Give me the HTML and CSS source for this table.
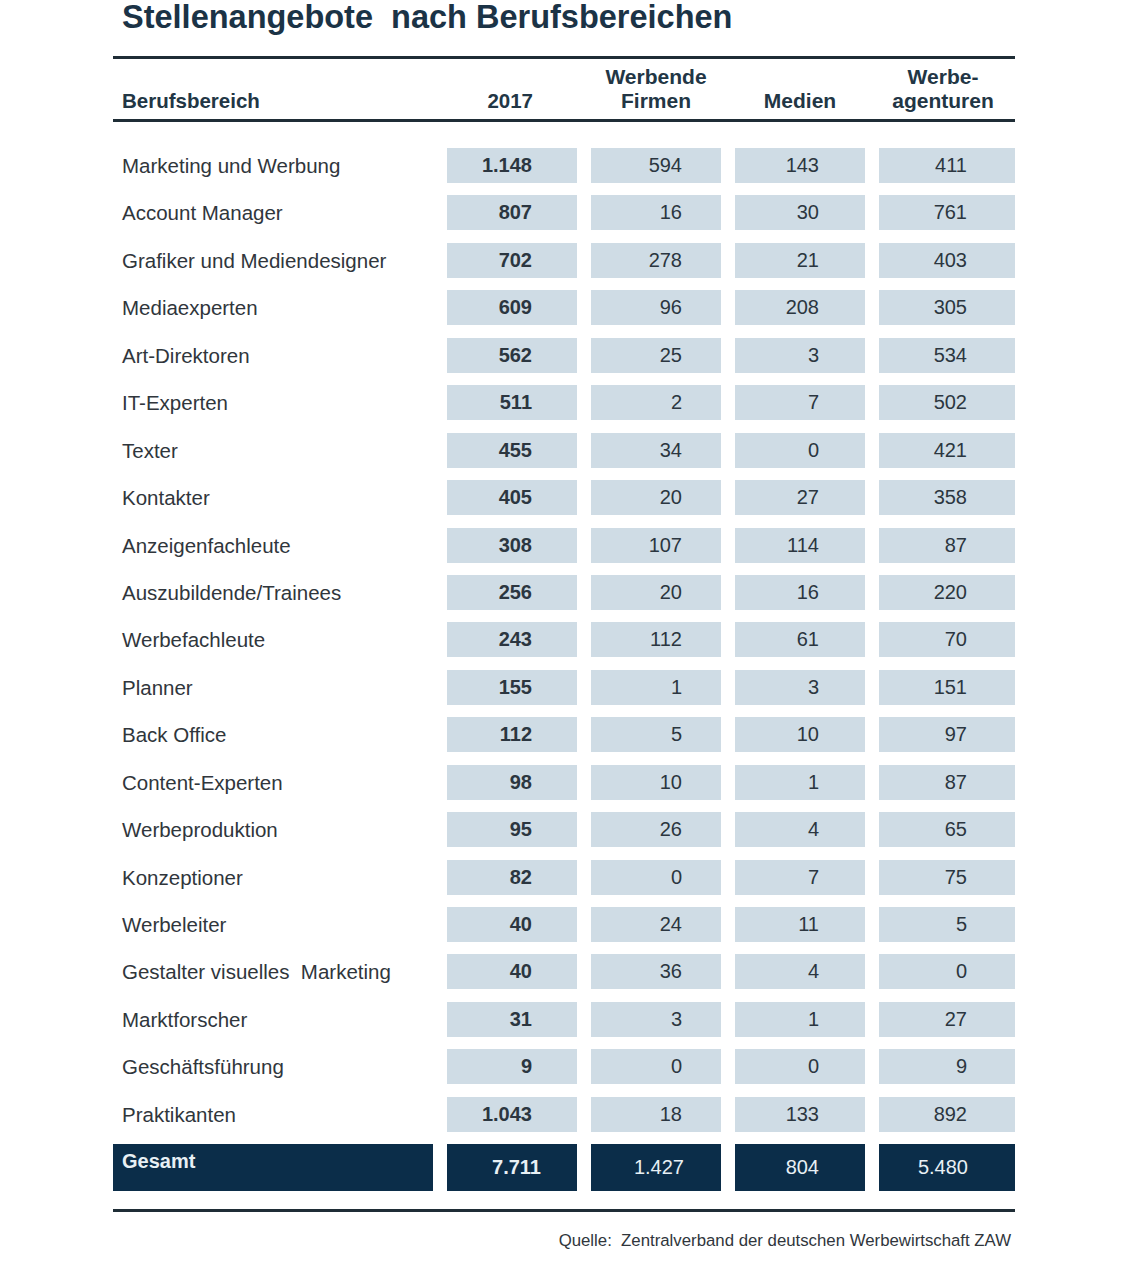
FILE: index.html
```html
<!DOCTYPE html>
<html lang="de">
<head>
<meta charset="utf-8">
<title>Stellenangebote nach Berufsbereichen</title>
<link rel="stylesheet" href="styles.css">
</head>
<body>
<div class="page">
  <h1 class="title">Stellenangebote&nbsp; nach Berufsbereichen</h1>
  <div class="table">
    <div class="row head">
      <div class="h-label">Berufsbereich</div>
      <div class="h-num c1">2017</div>
      <div class="h-num">Werbende<br>Firmen</div>
      <div class="h-num">Medien</div>
      <div class="h-num c4">Werbe-<br>agenturen</div>
    </div>
    <div class="body">
      <div class="row"><div class="label">Marketing und Werbung</div><div class="cell c1 b">1.148</div><div class="cell c2">594</div><div class="cell c3">143</div><div class="cell c4">411</div></div>
      <div class="row"><div class="label">Account Manager</div><div class="cell c1 b">807</div><div class="cell c2">16</div><div class="cell c3">30</div><div class="cell c4">761</div></div>
      <div class="row"><div class="label">Grafiker und Mediendesigner</div><div class="cell c1 b">702</div><div class="cell c2">278</div><div class="cell c3">21</div><div class="cell c4">403</div></div>
      <div class="row"><div class="label">Mediaexperten</div><div class="cell c1 b">609</div><div class="cell c2">96</div><div class="cell c3">208</div><div class="cell c4">305</div></div>
      <div class="row"><div class="label">Art-Direktoren</div><div class="cell c1 b">562</div><div class="cell c2">25</div><div class="cell c3">3</div><div class="cell c4">534</div></div>
      <div class="row"><div class="label">IT-Experten</div><div class="cell c1 b">511</div><div class="cell c2">2</div><div class="cell c3">7</div><div class="cell c4">502</div></div>
      <div class="row"><div class="label">Texter</div><div class="cell c1 b">455</div><div class="cell c2">34</div><div class="cell c3">0</div><div class="cell c4">421</div></div>
      <div class="row"><div class="label">Kontakter</div><div class="cell c1 b">405</div><div class="cell c2">20</div><div class="cell c3">27</div><div class="cell c4">358</div></div>
      <div class="row"><div class="label">Anzeigenfachleute</div><div class="cell c1 b">308</div><div class="cell c2">107</div><div class="cell c3">114</div><div class="cell c4">87</div></div>
      <div class="row"><div class="label">Auszubildende/Trainees</div><div class="cell c1 b">256</div><div class="cell c2">20</div><div class="cell c3">16</div><div class="cell c4">220</div></div>
      <div class="row"><div class="label">Werbefachleute</div><div class="cell c1 b">243</div><div class="cell c2">112</div><div class="cell c3">61</div><div class="cell c4">70</div></div>
      <div class="row"><div class="label">Planner</div><div class="cell c1 b">155</div><div class="cell c2">1</div><div class="cell c3">3</div><div class="cell c4">151</div></div>
      <div class="row"><div class="label">Back Office</div><div class="cell c1 b">112</div><div class="cell c2">5</div><div class="cell c3">10</div><div class="cell c4">97</div></div>
      <div class="row"><div class="label">Content-Experten</div><div class="cell c1 b">98</div><div class="cell c2">10</div><div class="cell c3">1</div><div class="cell c4">87</div></div>
      <div class="row"><div class="label">Werbeproduktion</div><div class="cell c1 b">95</div><div class="cell c2">26</div><div class="cell c3">4</div><div class="cell c4">65</div></div>
      <div class="row"><div class="label">Konzeptioner</div><div class="cell c1 b">82</div><div class="cell c2">0</div><div class="cell c3">7</div><div class="cell c4">75</div></div>
      <div class="row"><div class="label">Werbeleiter</div><div class="cell c1 b">40</div><div class="cell c2">24</div><div class="cell c3">11</div><div class="cell c4">5</div></div>
      <div class="row"><div class="label">Gestalter visuelles&nbsp; Marketing</div><div class="cell c1 b">40</div><div class="cell c2">36</div><div class="cell c3">4</div><div class="cell c4">0</div></div>
      <div class="row"><div class="label">Marktforscher</div><div class="cell c1 b">31</div><div class="cell c2">3</div><div class="cell c3">1</div><div class="cell c4">27</div></div>
      <div class="row"><div class="label">Geschäftsführung</div><div class="cell c1 b">9</div><div class="cell c2">0</div><div class="cell c3">0</div><div class="cell c4">9</div></div>
      <div class="row"><div class="label">Praktikanten</div><div class="cell c1 b">1.043</div><div class="cell c2">18</div><div class="cell c3">133</div><div class="cell c4">892</div></div>
      <div class="row total"><div class="t-label">Gesamt</div><div class="tcell c1 b">7.711</div><div class="tcell c2">1.427</div><div class="tcell c3">804</div><div class="tcell c4">5.480</div></div>
    </div>
  </div>
  <div class="source">Quelle:&nbsp; Zentralverband der deutschen Werbewirtschaft ZAW</div>
</div>
</body>
</html>
```

FILE: styles.css
```css
html, body {
  margin: 0;
  padding: 0;
  background: #ffffff;
}

body {
  font-family: "Liberation Sans", Arial, sans-serif;
  color: #2f353b;
}

.page {
  width: 902px;
  margin-left: 113px;
}

.title {
  margin: 0;
  padding-left: 9px;
  font-size: 32.5px;
  line-height: 34px;
  font-weight: bold;
  color: #1b3346;
  white-space: nowrap;
}

.table {
  margin-top: 22px;
  border-top: 3px solid #1f2d36;
}

.row {
  display: grid;
  grid-template-columns: 320px 130px 130px 130px 136px;
  column-gap: 14px;
  height: 35px;
}

.head {
  box-sizing: border-box;
  height: 63px;
  border-bottom: 3px solid #1f2d36;
  align-items: end;
}

.h-label,
.h-num {
  font-size: 21px;
  line-height: 24px;
  font-weight: bold;
  color: #223645;
  padding-bottom: 6px;
}

.h-label {
  padding-left: 9px;
  font-size: 20.5px;
}

.h-num {
  text-align: center;
}

.h-num.c1 {
  text-align: right;
  padding-right: 44px;
  font-size: 20.5px;
}

.h-num.c4 {
  padding-right: 8px;
}

.body {
  display: flex;
  flex-direction: column;
  gap: 12.45px;
  padding-top: 26px;
}

.label {
  padding-left: 9px;
  font-size: 20.5px;
  line-height: 35px;
  color: #30363c;
  white-space: nowrap;
}

.cell {
  background: #cfdce5;
  font-size: 20px;
  line-height: 35px;
  text-align: right;
  color: #2b3640;
}

.b {
  font-weight: bold;
}

.cell.c1 { padding-right: 45px; }
.cell.c2 { padding-right: 39px; }
.cell.c3 { padding-right: 46px; }
.cell.c4 { padding-right: 48px; }

.total {
  height: 47px;
}

.t-label,
.tcell {
  background: #0b2d49;
  color: #e8f0f5;
  font-size: 20px;
}

.t-label {
  font-weight: bold;
  padding-left: 9px;
  padding-top: 5px;
  line-height: 24px;
}

.tcell {
  line-height: 47px;
  text-align: right;
}

.tcell.c1 { padding-right: 36px; }
.tcell.c2 { padding-right: 37px; }
.tcell.c3 { padding-right: 46px; }
.tcell.c4 { padding-right: 47px; }

.source {
  margin-top: 18px;
  border-top: 3px solid #1f2d36;
  padding-top: 19px;
  text-align: right;
  padding-right: 4px;
  font-size: 16.8px;
  line-height: 20px;
  color: #30363c;
}
```
